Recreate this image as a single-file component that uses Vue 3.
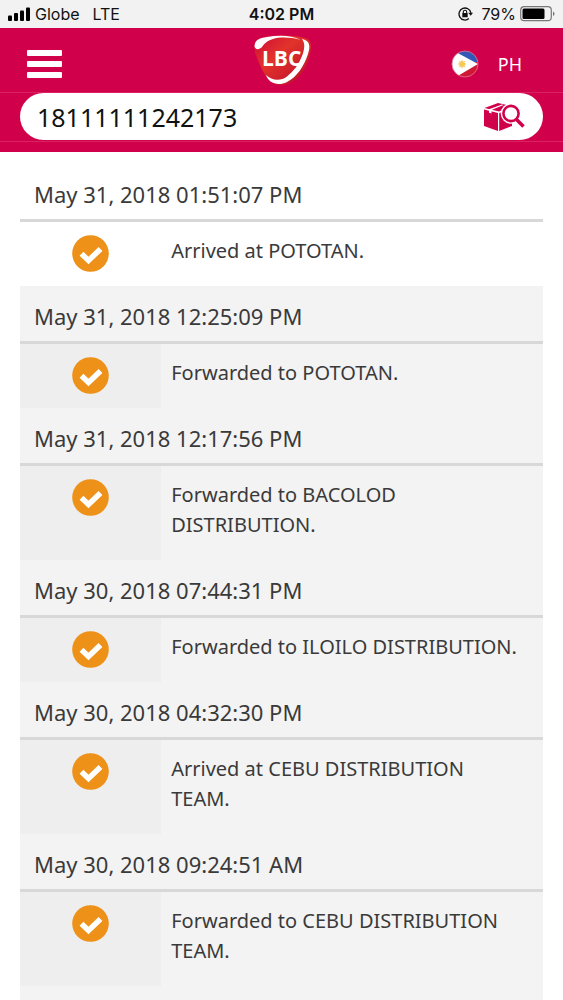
<script setup>
import { ref } from 'vue'

const tracking = ref('18111111242173')
const events = [
  { date: 'May 31, 2018 01:51:07 PM', text: 'Arrived at POTOTAN.' },
  { date: 'May 31, 2018 12:25:09 PM', text: 'Forwarded to POTOTAN.' },
  { date: 'May 31, 2018 12:17:56 PM', text: 'Forwarded to BACOLOD DISTRIBUTION.' },
  { date: 'May 30, 2018 07:44:31 PM', text: 'Forwarded to ILOILO DISTRIBUTION.' },
  { date: 'May 30, 2018 04:32:30 PM', text: 'Arrived at CEBU DISTRIBUTION TEAM.' },
  { date: 'May 30, 2018 09:24:51 AM', text: 'Forwarded to CEBU DISTRIBUTION TEAM.' },
]
</script>

<template>
  <div class="page">
    <div class="status">
      <div class="status-left">
        <svg class="signal" width="22" height="14" viewBox="0 0 22 14" aria-hidden="true">
          <rect x="0" y="8.500" width="4" height="5.500" rx="1" />
          <rect x="6" y="6" width="4" height="8" rx="1" />
          <rect x="12" y="3.500" width="4" height="10.500" rx="1" />
          <rect x="18" y="0.500" width="4" height="13.500" rx="1" />
        </svg>
        <span>Globe</span>
        <span class="network">LTE</span>
      </div>
      <span class="time">4:02 PM</span>
      <div class="status-right">
        <svg width="15" height="14" viewBox="0 0 15 14" aria-hidden="true">
          <path d="M10.900 11.600A6 6 0 1 1 12.900 5.800" fill="none" stroke="#111" stroke-width="1.300" />
          <path d="M10.300 5.800h4.700l-2.300 3z" fill="#111" />
          <rect x="4.300" y="6" width="5.400" height="4.200" rx=".5" fill="#111" />
          <path d="M5.300 6.300V5a1.700 1.700 0 0 1 3.400 0v1.300" fill="none" stroke="#111" stroke-width="1.100" />
        </svg>
        <span>79%</span>
        <svg class="battery" width="35" height="16" viewBox="0 0 35 16" aria-hidden="true">
          <rect x=".7" y=".7" width="30.600" height="14" rx="3.500" fill="none" stroke="#777" stroke-width="1.200" />
          <rect x="2.500" y="2.500" width="22" height="10.500" rx="1.500" />
          <path d="M33 5.500c2 .8 2 3.700 0 4.500z" fill="#777" />
        </svg>
      </div>
    </div>

    <header class="header">
      <div class="bar">
        <button class="menu" type="button" aria-label="Menu">
          <svg width="35" height="28" viewBox="0 0 35 28">
            <rect x="0" y="0" width="35" height="6" rx="1" />
            <rect x="0" y="11" width="35" height="6" rx="1" />
            <rect x="0" y="22" width="35" height="6" rx="1" />
          </svg>
        </button>
        <a class="logo" href="#" aria-label="LBC">
          <svg width="60" height="52" viewBox="0 0 60 52">
            <defs>
              <linearGradient id="shield" x1="0" y1="0" x2="1" y2="1">
                <stop offset="0" stop-color="#cf0a3c" />
                <stop offset=".4" stop-color="#e2332b" />
                <stop offset="1" stop-color="#b80a2c" />
              </linearGradient>
            </defs>
            <path d="M2 12C3 5 8 3 17 2C28 1 44 1 53 4C61 6 60 15 57 24C52 39 43 51 28 51C17 50 12 40 8 31C5 24 2 18 2 12Z" fill="url(#shield)" />
            <path d="M2.500 12C3 6 7 4 15 3C27 1 39 1 49 6C38 3 28 3 21 5C15 7 13 9 10 13C7 16 3 16 2.500 12Z" fill="#fff" />
            <path d="M50 5C59 7 58 13 56 20C52 32 45 43 35 48C25 53 16 48 14 41C20 47 29 47 35 42.500C42 37 47 30 50 22C53 14 53 9 50 5Z" fill="#fff" />
            <text x="10" y="32" class="mark">LBC</text>
          </svg>
        </a>
        <button class="country" type="button">
          <svg width="28" height="28" viewBox="0 0 28 28" aria-hidden="true">
            <defs><clipPath id="round"><circle cx="14" cy="14" r="13" /></clipPath></defs>
            <g clip-path="url(#round)">
              <path d="M-2-2h32v13L14 15H-2z" fill="#3159b5" />
              <path d="M-2 15h16L30 11v19H-2z" fill="#ce1834" />
              <path d="M-3-2L3 1L27 14L5 27L-3 30z" fill="#fff" />
              <path d="M11 9.500l1 2.300 2.400-1-1 2.300 2.300 1-2.300 1 1 2.300-2.400-1-1 2.300-1-2.300-2.300 1 1-2.300-2.300-1 2.300-1-1-2.300 2.300 1z" fill="#f4ca58" />
            </g>
            <circle cx="14" cy="14" r="13" fill="none" stroke="#e27a99" stroke-width=".8" />
          </svg>
          <span>PH</span>
        </button>
      </div>
      <form class="search" @submit.prevent>
        <div class="pill">
          <input v-model="tracking" type="text" aria-label="Tracking number" />
          <button class="find" type="submit" aria-label="Track">
            <svg width="42" height="32" viewBox="0 0 42 32">
              <path d="M1 8.500L15 12V30L1 25Z" fill="#d1004b" />
              <path d="M16.200 12L29 8V25L16.200 30Z" fill="#d1004b" />
              <path d="M1.500 7L15 2L28 5L16 10.500Z" fill="#d1004b" />
              <path d="M6 8.300L19 3.500L20.500 4L8.500 9V12.500L6 11.800Z" fill="#fff" />
              <circle cx="28" cy="12.500" r="10.300" fill="#fff" />
              <path d="M33 19L40 26" stroke="#fff" stroke-width="6" />
              <circle cx="28" cy="12.500" r="7.600" fill="#fff" stroke="#d1004b" stroke-width="2.600" />
              <path d="M33.500 18.500L40.500 25.500" stroke="#d1004b" stroke-width="3.500" />
            </svg>
          </button>
        </div>
      </form>
    </header>

    <main class="history">
      <section v-for="event in events" :key="event.date" class="event">
        <h2>{{ event.date }}</h2>
        <div class="detail">
          <div class="state">
            <svg width="37" height="37" viewBox="0 0 37 37" role="img" aria-label="Done">
              <circle cx="18.500" cy="18.500" r="18.300" fill="#ed9118" />
              <path d="M9.500 18.800L16.500 25.500L28.500 14" fill="none" stroke="#fff" stroke-width="5.500" />
            </svg>
          </div>
          <p>{{ event.text }}</p>
        </div>
      </section>
    </main>
  </div>
</template>

<style>
body {
  margin: 0;
  background: #fff;
}
</style>

<style scoped>
.page {
  display: flex;
  flex-direction: column;
  min-height: 100vh;
  box-sizing: border-box;
  font-family: "Trebuchet MS", "Noto Sans", sans-serif;
  color: #3a3a3a;
}
button {
  padding: 0;
  border: 0;
  background: none;
  font: inherit;
  color: inherit;
  cursor: pointer;
}
svg {
  display: block;
}
.status {
  display: grid;
  grid-template-columns: 1fr auto 1fr;
  align-items: center;
  height: 28px;
  padding: 0 8px;
  background: #f2f2f2;
  color: #111;
  font-family: Inter, sans-serif;
  font-size: 16px;
}
.status-left,
.status-right {
  display: flex;
  align-items: center;
  gap: 5px;
}
.status-right {
  justify-content: flex-end;
  gap: 8px;
}
.battery {
  margin-left: -4px;
}
.network {
  margin-left: 8px;
}
.time {
  font-weight: 600;
}
.header {
  padding-bottom: 10px;
  background: #d1004b;
}
.bar {
  display: grid;
  grid-template-columns: 1fr auto 1fr;
  align-items: center;
  height: 64px;
  padding: 0 27px;
}
.menu {
  justify-self: start;
  margin-top: 8px;
  fill: #fff;
}
.mark {
  font: bold 21px "Open Sans", sans-serif;
  fill: #fff;
}
.country {
  display: flex;
  justify-self: end;
  align-items: center;
  gap: 19px;
  margin: 8px 14px 0 0;
  color: #fff;
  font-size: 18px;
}
.search {
  padding: 0 20px 1px;
  border-top: 1px solid #da2161;
  border-bottom: 1px solid #da2161;
}
.pill {
  display: flex;
  align-items: center;
  height: 47px;
  padding: 0 18px 0 17px;
  border-radius: 24px;
  background: #fff;
}
.pill input {
  flex: 1;
  min-width: 0;
  padding: 0;
  border: 0;
  outline: 0;
  background: none;
  font: inherit;
  font-size: 25px;
  color: #111;
}
.history {
  display: flex;
  flex-direction: column;
  flex: 1;
  margin: 12px 20px 0;
  background: #f3f3f3;
}
.event:first-child {
  background: #fff;
}
h2 {
  margin: 0;
  padding: 15px 14px 10px;
  border-bottom: 3px solid #d8d8d8;
  font-size: 22px;
  font-weight: 400;
  line-height: 30px;
}
.detail {
  display: grid;
  grid-template-columns: 27% 1fr;
}
.state {
  display: flex;
  justify-content: center;
  align-items: flex-start;
  padding-top: 13px;
  background: #eee;
}
.event:first-child .state {
  background: none;
}
p {
  margin: 0;
  padding: 14px 20px 20px 10px;
  font-size: 20px;
  line-height: 30px;
}
</style>
